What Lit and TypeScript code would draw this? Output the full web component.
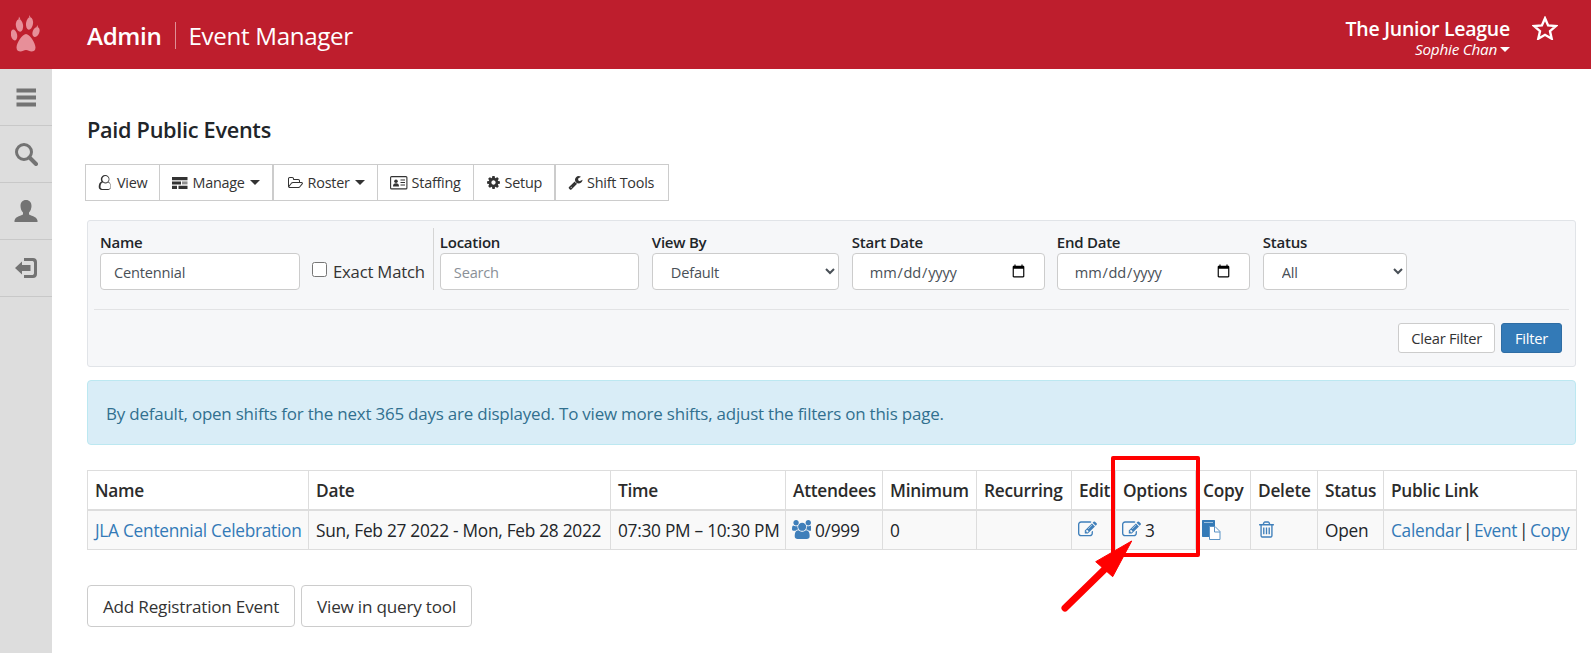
import { LitElement, html, css } from "lit";
import { customElement } from "lit/decorators.js";

const P = {
  edit: "M888 1184l116-116-152-152-116 116v56h96v96h56zm440-720q-16-16-33 1l-350 350q-17 17-1 33t33-1l350-350q17-17 1-33zm80 594v190q0 119-84.5 203.5t-203.5 84.5h-832q-119 0-203.5-84.5t-84.5-203.5v-832q0-119 84.5-203.5t203.5-84.5h832q63 0 117 25 15 7 18 23 3 17-9 29l-49 49q-14 14-32 8-23-6-45-6h-832q-66 0-113 47t-47 113v832q0 66 47 113t113 47h832q66 0 113-47t47-113v-126q0-13 9-22l64-64q15-15 35-7t20 29zm-96-738l288 288-672 672h-288v-288zm444 132l-92 92-288-288 92-92q28-28 68-28t68 28l152 152q28 28 28 68t-28 68z",
  trash: "M704 736v576q0 14-9 23t-23 9h-64q-14 0-23-9t-9-23v-576q0-14 9-23t23-9h64q14 0 23 9t9 23zm256 0v576q0 14-9 23t-23 9h-64q-14 0-23-9t-9-23v-576q0-14 9-23t23-9h64q14 0 23 9t9 23zm256 0v576q0 14-9 23t-23 9h-64q-14 0-23-9t-9-23v-576q0-14 9-23t23-9h64q14 0 23 9t9 23zm128 724v-948h-896v948q0 22 7 40.5t14.5 27 10.5 8.5h832q3 0 10.5-8.5t14.5-27 7-40.5zm-672-1076h448l-48-117q-7-9-17-11h-317q-10 2-17 11zm928 32v64q0 14-9 23t-23 9h-96v948q0 83-47 143.5t-113 60.5h-832q-66 0-113-58.5t-47-141.5v-952h-96q-14 0-23-9t-9-23v-64q0-14 9-23t23-9h309l70-167q15-37 54-63t79-26h320q40 0 79 26t54 63l70 167h309q14 0 23 9t9 23z",
  users: "M593 896q-162 5-265 128h-134q-82 0-138-40.5t-56-118.5q0-353 124-353 6 0 43.5 21t97.5 42.5 119 21.5q67 0 133-23-5 37-5 66 0 139 81 256zm1071 637q0 120-73 189.5t-194 69.5h-874q-121 0-194-69.5t-73-189.5q0-53 3.5-103.5t14-109 26.5-108.5 43-97.5 62-81 85.5-53.5 111.5-20q10 0 43 21.5t73 48 107 48 135 21.5 135-21.5 107-48 73-48 43-21.5q61 0 111.5 20t85.5 53.5 62 81 43 97.5 26.5 108.5 14 109 3.5 103.5zm-1024-1277q0 106-75 181t-181 75-181-75-75-181 75-181 181-75 181 75 75 181zm704 384q0 159-112.5 271.5t-271.5 112.5-271.5-112.5-112.5-271.5 112.5-271.5 271.5-112.5 271.5 112.5 112.5 271.5zm576 225q0 78-56 118.5t-138 40.5h-134q-103-123-265-128 81-117 81-256 0-29-5-66 66 23 133 23 59 0 119-21.5t97.5-42.5 43.5-21q124 0 124 353zm-128-609q0 106-75 181t-181 75-181-75-75-181 75-181 181-75 181 75 75 181z",
  cog: "M1152 896q0-106-75-181t-181-75-181 75-75 181 75 181 181 75 181-75 75-181zm512-109v222q0 12-8 23t-20 13l-185 28q-19 54-39 91 35 50 107 138 10 12 10 25t-9 23q-27 37-99 108t-94 71q-12 0-26-9l-138-108q-44 23-91 38-16 136-29 186-7 28-36 28h-222q-14 0-24.5-8.5t-11.5-21.5l-28-184q-49-16-90-37l-141 107q-10 9-25 9-14 0-25-11-126-114-165-168-7-10-7-23 0-12 8-23 15-21 51-66.5t54-70.5q-27-50-41-99l-183-27q-13-2-21-12.5t-8-23.5v-222q0-12 8-23t19-13l186-28q14-46 39-92-40-57-107-138-10-12-10-24 0-10 9-23 26-36 98.5-107.5t94.5-71.5q13 0 26 10l138 107q44-23 91-38 16-136 29-186 7-28 36-28h222q14 0 24.5 8.5t11.5 21.5l28 184q49 16 90 37l142-107q9-9 24-9 13 0 25 10 129 119 165 170 7 8 7 22 0 12-8 23-15 21-51 66.5t-54 70.5q26 50 41 98l183 28q13 2 21 12.5t8 23.5z",
  wrench: "M448 1472q0-26-19-45t-45-19-45 19-19 45 19 45 45 19 45-19 19-45zm644-420l-682 682q-37 37-90 37-52 0-91-37l-106-108q-38-36-38-90 0-53 38-91l681-681q39 98 114.5 173.5t173.5 114.5zm634-435q0 39-23 106-47 134-164.5 217.5t-258.5 83.5q-185 0-316.5-131.5t-131.5-316.5 131.5-316.5 316.5-131.5q58 0 121.5 16.5t107.5 46.5q16 11 16 28t-16 28l-293 169v224l193 107q5-3 79-48.5t135.5-81 70.5-35.5q15 0 23.5 10t8.5 25z",
  userO: "M1201 784q47 14 89.5 38t89 73 79.5 115.5 55 172 22 236.5q0 154-100 263.5t-241 109.5h-768q-141 0-241-109.5t-100-263.5q0-131 22-236.5t55-172 79.5-115.5 89-73 89.5-38q-79-125-79-272 0-104 40.5-198.5t109.5-163.5 163.5-109.5 198.5-40.5 198.5 40.5 163.5 109.5 109.5 163.5 40.5 198.5q0 147-79 272zm-305-656q-159 0-271.5 112.5t-112.5 271.5 112.5 271.5 271.5 112.5 271.5-112.5 112.5-271.5-112.5-271.5-271.5-112.5zm384 1536q88 0 150-71.5t62-173.5q0-239-78.5-377t-225.5-145q-145 127-292 127t-292-127q-147 7-225.5 145t-78.5 377q0 102 62 173.5t150 71.5h768z",
  folder: "M1781 931q0-35-53-35h-1088q-40 0-85.5 21.5t-71.5 52.5l-294 363q-18 24-18 40 0 35 53 35h1088q40 0 86-22t71-53l294-363q18-22 18-39zm-1141-163h768v-160q0-40-28-68t-68-28h-576q-40 0-68-28t-28-68v-64q0-40-28-68t-68-28h-320q-40 0-68 28t-28 68v853l256-315q44-53 116-87.5t140-34.5zm1269 163q0 62-46 120l-295 363q-43 53-116 87.5t-140 34.5h-1088q-92 0-158-66t-66-158v-960q0-92 66-158t158-66h320q92 0 158 66t66 158v32h544q92 0 158 66t66 158v160h192q54 0 99 24.5t67 70.5q15 32 15 68z",
};

const fa = (d: string, cls: string) =>
  html`<svg class=${cls} viewBox="0 0 1792 1792" fill="currentColor"><path d=${d}></path></svg>`;

const caret = html`<svg class="caret" viewBox="0 0 10 5" fill="currentColor"><path d="M0 0h10L5 5z"></path></svg>`;

const paw = html`<svg class="paw" viewBox="0 0 29 37" fill="#e78f99">
  <ellipse cx="3" cy="20" rx="3.100" ry="5.500" transform="rotate(-12 3 20)"></ellipse>
  <ellipse cx="8.500" cy="10.500" rx="3.600" ry="6.200" transform="rotate(-8 8.500 10.500)"></ellipse>
  <ellipse cx="18.500" cy="8.500" rx="3.500" ry="6.200" transform="rotate(8 18.500 8.500)"></ellipse>
  <ellipse cx="25" cy="17" rx="3.300" ry="5.200" transform="rotate(22 25 17)"></ellipse>
  <path d="M15 19c3.500 0 9.500 9 9.500 13.500 0 3-2 4-4 4-2 0-3.500-1.500-5.500-1.500s-3.500 1.500-5.500 1.500c-2 0-4-1-4-4C5.500 28 11.500 19 15 19z"></path>
  <path d="M7.500 4.500 8 1.500 9.500 4.500zM18 2.500 18.500 0 19.500 2.500zM25.500 12 26.500 10 27 12.500z"></path>
</svg>`;

const manage = html`<svg class="ic16" viewBox="0 0 16 12" fill="currentColor">
  <path d="M0 0h15.500v3.200H0zM0 4.400h9v3H0zM0 8.800h5v3.200H0zM6.500 8.800h9V12h-9z"></path>
  <path d="M10 4.400h5.500v3H10z" opacity=".55"></path></svg>`;

const idCard = html`<svg class="ic16w" viewBox="0 0 18 14">
  <rect x=".6" y=".6" width="16.300" height="12.300" rx="1" fill="none" stroke="currentColor" stroke-width="1.100"></rect>
  <circle cx="6" cy="5.200" r="1.800" fill="currentColor"></circle>
  <path d="M3 10.500c0-2.400 1-3.200 3-3.200s3 .8 3 3.200z" fill="currentColor"></path>
  <path d="M10.500 4h4.500M10.500 6.500h4.500M10.500 9h4.500" stroke="currentColor" stroke-width="1"></path></svg>`;

const copyIc = html`<svg class="copy" viewBox="0 0 19 20">
  <path d="M0 1c0-.6.400-1 1-1h11c.6 0 1 .4 1 1v15c0 .6-.4 1-1 1H1c-.6 0-1-.4-1-1z" fill="#337ab7"></path>
  <path d="M2 2.500h9" stroke="#9cc0de" stroke-width="1"></path>
  <path d="M7.500 6.500h5.500l5 5v8h-10.500z" fill="#fff" stroke="#5b93c5" stroke-width="1"></path>
  <path d="M12.500 6.500v5.500h5.500" fill="none" stroke="#5b93c5" stroke-width="1"></path></svg>`;

@customElement("app-root")
export class AppRoot extends LitElement {
  static styles = css`
    :host {
      display: block;
      position: relative;
      height: 653px;
      overflow: hidden;
      background: #fff;
      color: #212529;
      font-family: "Open Sans", "Noto Sans", sans-serif;
      font-size: 14.5px;
      letter-spacing: -0.25px;
    }
    * { box-sizing: border-box; }
    svg { display: block; flex: none; }
    .top {
      height: 69px;
      background: #be1e2d;
      color: #fff;
      display: flex;
      align-items: center;
    }
    .paw { width: 29px; height: 37px; margin: -2px 0 0 11px; }
    .brand { display: flex; align-items: center; margin: 2px 0 0 47px; font-size: 24.200px; letter-spacing: -0.35px; }
    .brand b { font-weight: 600; padding-right: 13px; border-right: 1px solid rgba(255,255,255,.5); line-height: 27px; }
    .brand span { padding-left: 13px; }
    .who { margin: 7px 0 0 auto; text-align: right; }
    .who .org { font-size: 19.500px; font-weight: 600; letter-spacing: -0.25px; line-height: 22px; }
    .who .user { font-size: 15.300px; font-style: italic; display: flex; justify-content: flex-end; align-items: center; gap: 3px; line-height: 19px; }
    .who .caret { width: 10px; height: 5px; }
    .star { width: 26px; height: 24px; margin: -14px 33px 0 22px; }
    .body { display: flex; height: 584px; }
    .side { width: 52px; background: #ddd; flex: none; color: #737373; }
    .side div { height: 57px; border-bottom: 1px solid #c8c8c8; display: flex; align-items: center; justify-content: center; }
    .side svg { width: 24px; height: 24px; }
    .main { flex: 1; padding: 47px 15px 0 35px; min-width: 0; }
    h1 { font-size: 21.700px; line-height: 27px; font-weight: 600; margin: 0 0 21px; letter-spacing: -0.3px; }
    .tabs { display: flex; height: 37px; margin-left: -2px; width: max-content; border: 1px solid #ccc; }
    .tabs div { display: flex; align-items: center; gap: 4px; padding: 0 12px; border-right: 1px solid #ccc; font-size: 14.400px; color: #333; }
    .tabs div:last-child { border-right: 0; padding-right: 14px; }
    .tabs .thick { border-right-width: 2px; }
    .tabs .caret { width: 10px; height: 5px; margin-left: 1px; }
    .ic14 { width: 15px; height: 15px; }
    .ic16 { width: 16px; height: 12px; }
    .ic16w { width: 18px; height: 14px; }
    .panel { margin-top: 19px; height: 147px; border: 1px solid #e1e4e8; border-radius: 3px; background: #f6f7f9; padding: 12px 6px 0; }
    .row { display: flex; height: 62px; padding-left: 6px; align-items: flex-start; }
    .field { display: flex; flex-direction: column; margin-right: 13px; }
    .field.tight { margin-right: 12px; }
    .field label { font-size: 15px; font-weight: 600; line-height: 20px; letter-spacing: -0.25px; margin-top: -1px; margin-bottom: 1px; }
    .ctrl {
      height: 37px;
      border: 1px solid #ccc;
      border-radius: 4px;
      background: #fff;
      padding: 0 13px;
      font: inherit;
      font-size: 14.600px;
      color: #495057;
      letter-spacing: -0.2px;
      outline: none;
    }
    select.ctrl { padding-left: 14px; }
    input[type="date"].ctrl { padding: 0 16px; }
    input::placeholder { color: #8a9097; }
    .w200 { width: 200px; }
    .w199 { width: 199px; }
    .w187 { width: 187px; }
    .w193 { width: 193px; }
    .w144 { width: 144px; }
    .exact { display: flex; align-items: center; gap: 6px; height: 62px; margin: -5px 6px 0 -1px; padding: 24px 8px 0 0; border-right: 1px solid #d5d5d5; font-size: 16.700px; letter-spacing: -0.2px; color: #333; }
    .exact input { width: 15px; height: 15px; margin: -3px 0 0; }
    .panel hr { border: 0; border-top: 1px solid #e2e3e5; margin: 14px 0 13px; }
    .actions { display: flex; justify-content: flex-end; gap: 6px; padding-right: 7px; }
    .btn { height: 30px; display: flex; align-items: center; padding: 0 12px; border: 1px solid #ccc; border-radius: 3px; background: #fff; font-size: 14.700px; color: #333; }
    .btn.pri { background: #337ab7; border-color: #2e6da4; color: #fff; padding: 0 13px; }
    .alert { margin-top: 13px; height: 65px; border: 1px solid #bce8f1; border-radius: 4px; background: #d9edf7; color: #31708f; display: flex; align-items: center; padding-left: 18px; font-size: 16.950px; letter-spacing: -0.2px; padding-top: 1px; }
    table { margin-top: 25px; width: 1489px; table-layout: fixed; border-collapse: collapse; font-size: 17.300px; }
    th, td { border: 1px solid #ddd; padding: 2px 7px 0; white-space: nowrap; text-align: left; overflow: hidden; }
    th { height: 39px; font-weight: 600; border-bottom-width: 2px; color: #2b2b2b; letter-spacing: -0.25px; }
    td { height: 40px; background: #f9f9f9; letter-spacing: -0.27px; }
    td.links { word-spacing: -2.500px; }
    a { color: #337ab7; }
    .c1 { width: 221px; } .c2 { width: 302px; } .c3 { width: 175px; } .c4 { width: 97px; } .c5 { width: 94px; }
    .c6 { width: 95px; } .c7 { width: 44px; } .c8 { width: 80px; } .c9 { width: 55px; } .c10 { width: 67px; } .c11 { width: 66px; } .c12 { width: 193px; }
    .cell { display: flex; align-items: center; gap: 4px; }
    .blue { color: #3f7fba; }
    .ic18 { width: 19px; height: 19px; margin: -3px 0 0 -1px; }
    .copy { width: 19px; height: 20px; margin: -2px 0 0 -1px; }
    .bottom { display: flex; gap: 6px; margin-top: 35px; }
    .big { height: 42px; display: flex; align-items: center; padding: 1px 15px 0; border: 1px solid #ccc; border-radius: 4px; font-size: 17.100px; color: #333; letter-spacing: -0.2px; }
    .box { position: absolute; left: 1111px; top: 456px; width: 89px; height: 101px; border: 4px solid #f00; border-radius: 2px; }
    .arrow { position: absolute; left: 1050px; top: 530px; width: 100px; height: 90px; }
  `;

  render() {
    return html`
      <div class="top">
        ${paw}
        <div class="brand"><b>Admin</b><span>Event Manager</span></div>
        <div class="who">
          <div class="org">The Junior League</div>
          <div class="user">Sophie Chan ${caret}</div>
        </div>
        <svg class="star" viewBox="0 0 26 24"><path d="M13 2.300 16.100 9.400 23.800 10.100 18 15.200 19.700 22.700 13 18.800 6.300 22.700 8 15.200 2.200 10.100 9.900 9.400Z" fill="none" stroke="#fff" stroke-width="2.400"></path></svg>
      </div>
      <div class="body">
        <nav class="side">
          <div><svg viewBox="0 0 24 24" fill="currentColor"><path d="M2.500 3.500H22v4H2.500zM2.500 10.500H22v4H2.500zM2.500 17.500H22v4H2.500z"></path></svg></div>
          <div><svg viewBox="0 0 24 24" fill="none" stroke="currentColor"><circle cx="10" cy="10" r="7.500" stroke-width="3"></circle><path d="M15.500 15.500 22 22" stroke-width="4" stroke-linecap="round"></path></svg></div>
          <div><svg viewBox="0 0 24 24" fill="currentColor"><path d="M12 1c3.500 0 5.500 2.500 5.500 6 0 2.500-1 5-2.500 6.500v2c1 1 7.500 1.500 8.500 6v1.500H.5V21.500c1-4.500 7.500-5 8.500-6v-2C7.500 12 6.500 9.500 6.500 7c0-3.500 2-6 5.500-6z"></path></svg></div>
          <div><svg viewBox="0 0 24 24" fill="currentColor"><path d="M10 2h9c2.500 0 4 1.500 4 4v12c0 2.500-1.500 4-4 4h-9v-3h8c1 0 2-.5 2-2V7c0-1.500-1-2-2-2h-8z"></path><path d="M1 12l7-6.500V9h8.500v6H8v3.500z"></path></svg></div>
        </nav>
        <main class="main">
          <h1>Paid Public Events</h1>
          <div class="tabs">
            <div>${fa(P.userO, "ic14")}View</div>
            <div class="thick">${manage}Manage ${caret}</div>
            <div>${fa(P.folder, "ic16w")}Roster ${caret}</div>
            <div>${idCard}Staffing</div>
            <div class="thick">${fa(P.cog, "ic14")}Setup</div>
            <div>${fa(P.wrench, "ic14")}Shift Tools</div>
          </div>
          <section class="panel">
            <div class="row">
              <div class="field"><label>Name</label><input class="ctrl w200" .value=${"Centennial"} /></div>
              <label class="exact"><input type="checkbox" />Exact Match</label>
              <div class="field"><label>Location</label><input class="ctrl w199" placeholder="Search" /></div>
              <div class="field"><label>View By</label><select class="ctrl w187"><option>Default</option></select></div>
              <div class="field tight"><label>Start Date</label><input type="date" class="ctrl w193" /></div>
              <div class="field"><label>End Date</label><input type="date" class="ctrl w193" /></div>
              <div class="field"><label>Status</label><select class="ctrl w144"><option>All</option></select></div>
            </div>
            <hr />
            <div class="actions"><div class="btn">Clear Filter</div><div class="btn pri">Filter</div></div>
          </section>
          <div class="alert">By default, open shifts for the next 365 days are displayed. To view more shifts, adjust the filters on this page.</div>
          <table>
            <thead><tr>
              <th class="c1">Name</th><th class="c2">Date</th><th class="c3">Time</th><th class="c4">Attendees</th>
              <th class="c5">Minimum</th><th class="c6">Recurring</th><th class="c7">Edit</th><th class="c8">Options</th>
              <th class="c9">Copy</th><th class="c10">Delete</th><th class="c11">Status</th><th class="c12">Public Link</th>
            </tr></thead>
            <tbody><tr>
              <td><a>JLA Centennial Celebration</a></td>
              <td>Sun, Feb 27 2022 - Mon, Feb 28 2022</td>
              <td>07:30 PM – 10:30 PM</td>
              <td><div class="cell">${fa(P.users, "ic18 blue")}0/999</div></td>
              <td>0</td>
              <td></td>
              <td>${fa(P.edit, "ic18 blue")}</td>
              <td><div class="cell">${fa(P.edit, "ic18 blue")}3</div></td>
              <td>${copyIc}</td>
              <td>${fa(P.trash, "ic18 blue")}</td>
              <td>Open</td>
              <td class="links"><a>Calendar</a> | <a>Event</a> | <a>Copy</a></td>
            </tr></tbody>
          </table>
          <div class="bottom"><div class="big">Add Registration Event</div><div class="big">View in query tool</div></div>
        </main>
      </div>
      <div class="box"></div>
      <svg class="arrow" viewBox="0 0 100 90">
        <path d="M15 78 L57 37" stroke="#f00" stroke-width="7" stroke-linecap="round"></path>
        <path d="M81.700 11 L45.700 31.700 L62.700 46.700 Z" fill="#f00" stroke="#f00" stroke-width="1"></path>
      </svg>
    `;
  }
}
